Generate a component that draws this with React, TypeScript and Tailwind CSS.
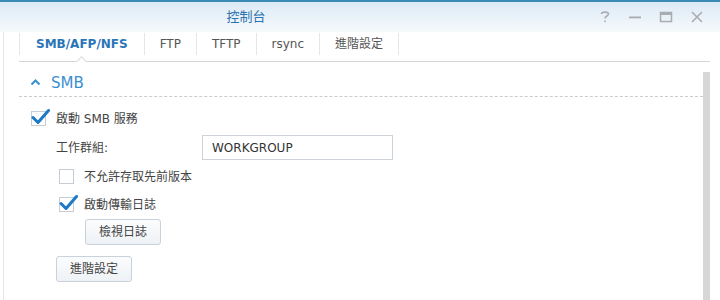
import React from 'react'

const font = { fontFamily: '"DejaVu Sans", "Noto Sans CJK TC", sans-serif' }

function Check({ checked }: { checked: boolean }) {
  return (
    <span className="relative inline-block w-[15px] h-[15px] border border-[#c6ccd3] bg-white">
      {checked && (
        <svg className="absolute -left-[1px] -top-[4px]" width="20" height="18" viewBox="0 0 20 18">
          <path d="M2 9.5 L7 14.5 L17.5 2.5" fill="none" stroke="#1d78c6" strokeWidth="3" strokeLinecap="round" strokeLinejoin="round" />
        </svg>
      )}
    </span>
  )
}

function Btn({ children }: { children: React.ReactNode }) {
  return (
    <button className="h-[26px] px-[13px] rounded-[3px] border border-[#c9d1da] bg-gradient-to-b from-[#fbfcfd] to-[#eef2f6] text-[12px] text-[#444]">
      {children}
    </button>
  )
}

const tabs = ['SMB/AFP/NFS', 'FTP', 'TFTP', 'rsync', '進階設定']

export default function App() {
  return (
    <div className="w-[720px] h-[300px] overflow-hidden bg-white relative" style={font}>
      {/* title bar */}
      <div className="h-[32px] border-t-2 border-[#3a8ab5] bg-gradient-to-b from-[#dceaf6] to-[#f6f9fc] flex items-center relative">
        <div className="absolute left-0 w-[492px] text-center text-[13px] text-[#2e73b0]">
          控制台
        </div>
        <div className="ml-auto flex items-center gap-[17px] pr-[16px]">
          <svg width="12" height="14" viewBox="0 0 12 14">
            <path d="M2.5 4 C2.5 1.5 9.5 1.5 9.5 4 C9.5 6 6 6 6 8.5" fill="none" stroke="#a9adb1" strokeWidth="1.6" />
            <rect x="5.2" y="10.5" width="1.6" height="1.6" fill="#a9adb1" />
          </svg>
          <svg width="14" height="14" viewBox="0 0 14 14">
            <rect x="1" y="6.5" width="12" height="1.8" fill="#a9adb1" />
          </svg>
          <svg width="14" height="14" viewBox="0 0 14 14">
            <rect x="1.5" y="2.5" width="11" height="9" fill="none" stroke="#a9adb1" strokeWidth="1.5" />
            <rect x="1.5" y="2.5" width="11" height="2.5" fill="#a9adb1" />
          </svg>
          <svg width="14" height="14" viewBox="0 0 14 14">
            <path d="M2 2 L12 12 M12 2 L2 12" stroke="#a9adb1" strokeWidth="1.6" />
          </svg>
        </div>
      </div>

      <div className="flex h-[268px]">
        <div className="w-[4px] border-r border-[#e3e6ea]" />
        <div className="flex-1 pl-[15px] pr-[10px]">
          {/* tabs */}
          <div className="relative h-[30px] flex items-start border-b border-[#d3d7db]">
            <div className="h-[22px] mt-[1px] w-0 border-l border-[#e3e6ea]" />
            {tabs.map((t, i) => (
              <React.Fragment key={t}>
                <div
                  className={
                    i === 0
                      ? 'pt-[3px] leading-[18px] px-[16px] text-[12px] font-bold text-[#2a74b8]'
                      : 'pt-[3px] leading-[18px] px-[15px] text-[12px] text-[#555]'
                  }
                >
                  {t}
                </div>
                <div className="h-[22px] mt-[1px] w-0 border-l border-[#e3e6ea]" />
              </React.Fragment>
            ))}
            <div className="absolute left-[56px] -bottom-[1px] w-[12px] h-[7px] overflow-hidden">
              <div className="w-[9px] h-[9px] bg-white border-l border-t border-[#d3d7db] rotate-45 mx-auto mt-[3px]" />
            </div>
          </div>

          <div className="flex">
            <div className="flex-1">
              {/* section header */}
              <div className="h-[35px] flex items-end pb-[5px] gap-[10px] pl-[11px] border-b border-dashed border-[#c9cdd1]">
                <svg width="11" height="8" viewBox="0 0 11 8" className="mb-[5px]">
                  <path d="M1.5 6.5 L5.5 2.5 L9.5 6.5" fill="none" stroke="#3a8fd0" strokeWidth="2" />
                </svg>
                <span className="text-[15px] text-[#3a8fd0] leading-none">SMB</span>
              </div>

              <div className="pl-[12px] pt-[14px] text-[12px] text-[#444]">
                <label className="flex items-center gap-[10px] h-[15px]">
                  <Check checked />
                  <span>啟動 SMB 服務</span>
                </label>
                <div className="flex items-center mt-[9px] pl-[25px]">
                  <span className="w-[146px]">工作群組:</span>
                  <div className="w-[191px] h-[25px] border border-[#cdd3d9] flex items-center px-[9px] text-[12px] text-[#333]">
                    WORKGROUP
                  </div>
                </div>
                <div className="pl-[28px] mt-[9px] flex flex-col">
                  <label className="flex items-center gap-[10px] h-[15px]">
                    <Check checked={false} />
                    <span>不允許存取先前版本</span>
                  </label>
                  <label className="flex items-center gap-[10px] h-[15px] mt-[13px]">
                    <Check checked />
                    <span>啟動傳輸日誌</span>
                  </label>
                  <div className="pl-[26px] mt-[7px]">
                    <Btn>檢視日誌</Btn>
                  </div>
                </div>
                <div className="pl-[25px] mt-[11px]">
                  <Btn>進階設定</Btn>
                </div>
              </div>
            </div>
            <div className="w-[7px] bg-[#d6d7d9] mt-[10px] h-[240px]" />
          </div>
        </div>
      </div>
    </div>
  )
}
